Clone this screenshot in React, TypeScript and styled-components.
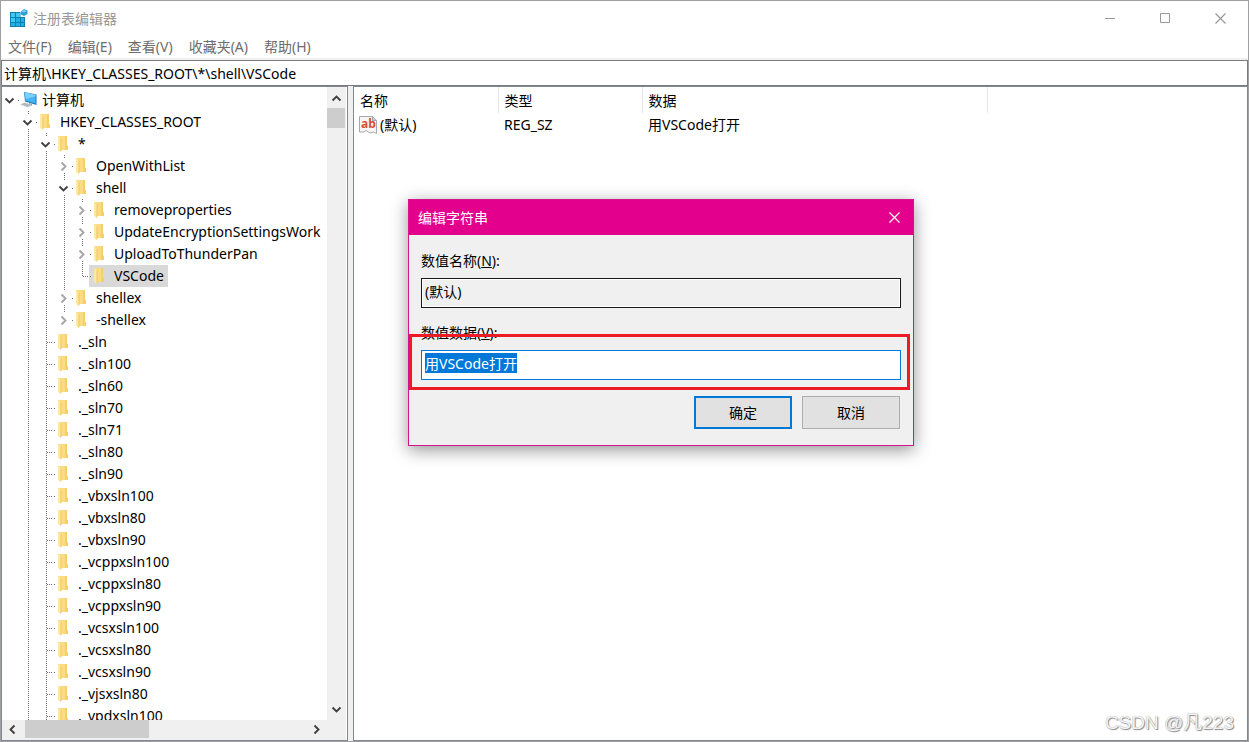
import React, { useEffect, useRef } from "react";
import styled, { createGlobalStyle, css } from "styled-components";

const GlobalStyle = createGlobalStyle`
  * { box-sizing: border-box; }
  body {
    margin: 0;
    background: #fff;
    color: #000;
    font: 14px/22px "Noto Sans", "Noto Sans CJK SC", sans-serif;
  }
  button, input { font: inherit; color: inherit; }
`;

const Window = styled.div`
  position: relative;
  display: flex;
  flex-direction: column;
  height: 100vh;
  overflow: hidden;
  border: 1px solid #a0a0a3;
  background: #fff;
`;

const TitleBar = styled.header`
  display: flex;
  align-items: center;
  flex: none;
  height: 35px;
  padding-left: 8px;
  color: #999;
`;

const Title = styled.h1`
  flex: 1;
  margin: 0 0 0 5px;
  font-size: 14px;
  font-weight: 400;
`;

const CaptionButton = styled.button`
  display: grid;
  place-items: center;
  width: 55px;
  height: 34px;
  padding: 0;
  border: 0;
  background: none;
  color: inherit;
`;

const MenuBar = styled.nav`
  display: flex;
  flex: none;
  height: 22px;
  padding-left: 7px;
  gap: 16px;
`;

const MenuItem = styled.button`
  padding: 0;
  border: 0;
  background: none;
  color: #6d6d6d;
  line-height: 22px;
  white-space: nowrap;
`;

const AddressStrip = styled.div`
  flex: none;
  padding-top: 2px;
  background: #f0f0f0;
`;

const Address = styled.input`
  display: block;
  width: 100%;
  height: 26px;
  padding: 0 2px;
  border: 1px solid #7a7a7a;
  background: #fff;
  outline: 0;
`;

const Panes = styled.main`
  display: flex;
  flex: 1;
  min-height: 0;
  gap: 5px;
  background: #f0f0f0;
`;

const pane = css`
  display: flex;
  flex-direction: column;
  border: 1px solid #828790;
  background: #fff;
`;

const TreePane = styled.section`
  ${pane}
  width: 347px;
  flex: none;
  padding-right: 1px;
`;

const ListPane = styled.section`
  ${pane}
  flex: 1;
  min-width: 0;
`;

const TreeBody = styled.div`
  display: flex;
  flex: 1;
  min-height: 0;
`;

const TreeRows = styled.ul`
  flex: 1;
  min-width: 0;
  margin: 0;
  padding: 2px 0 0;
  list-style: none;
  overflow: hidden;
`;

const TreeRow = styled.li`
  display: flex;
  height: 22px;
  white-space: nowrap;
`;

type LineKind = "none" | "full" | "top";

const dotsDown = "repeating-linear-gradient(to bottom, #707070 0 1px, transparent 1px 2px)";
const dotsAcross = "repeating-linear-gradient(to right, #707070 0 1px, transparent 1px 2px)";

const Guide = styled.span<{ $line: LineKind; $root?: boolean; $branch?: boolean }>`
  display: flex;
  justify-content: flex-end;
  align-items: center;
  flex: none;
  width: ${(p) => (p.$root ? 15 : 18)}px;
  padding-right: 2px;
  background-repeat: no-repeat;
  background-image: ${(p) => (p.$line === "none" ? "none" : dotsDown)}${(p) => (p.$branch ? `, ${dotsAcross}` : "")};
  background-size: 1px ${(p) => (p.$line === "top" ? "11px" : "22px")}, 6px 1px;
  background-position: right 6px top 0, right 0 top 11px;
`;

const Toggle = styled.button`
  display: grid;
  place-items: center;
  width: 11px;
  height: 14px;
  padding: 0;
  border: 0;
  background: #fff;
`;

const Node = styled.button<{ $selected?: boolean }>`
  display: flex;
  align-items: center;
  height: 22px;
  padding: 0 4px 0 0;
  border: 0;
  background: ${(p) => (p.$selected ? "#d9d9d9" : "none")};
  white-space: nowrap;
`;

const NodeIcon = styled.span`
  display: flex;
  align-items: center;
  width: 25px;
  height: 22px;
  padding-left: 3px;
  background: linear-gradient(#707070, #707070) 1px 11px / 1px 1px no-repeat;
`;

const VerticalBar = styled.div`
  display: flex;
  flex-direction: column;
  align-items: center;
  width: 19px;
  flex: none;
  padding: 1px 1px 1px 0;
  background: #f0f0f0;
`;

const HorizontalBar = styled.div`
  display: flex;
  align-items: center;
  height: 20px;
  flex: none;
  padding: 0 20px 2px 0;
  background: #f0f0f0;
`;

const ScrollButton = styled.button`
  display: grid;
  place-items: center;
  width: 20px;
  height: 20px;
  padding: 0;
  border: 0;
  background: none;
`;

const Track = styled.div<{ $inset?: boolean }>`
  flex: 1;
  align-self: stretch;
  display: flex;
  padding-left: ${(p) => (p.$inset ? 3 : 0)}px;
`;

const Thumb = styled.div<{ $vertical?: boolean }>`
  background: #cdcdcd;
  ${(p) => (p.$vertical ? "width: 18px; height: 20px;" : "width: 124px; height: 18px;")}
`;

const ValueTable = styled.table`
  width: 633px;
  table-layout: fixed;
  border-collapse: collapse;
  text-align: left;
`;

const HeadCell = styled.th<{ $width: number }>`
  width: ${(p) => p.$width}px;
  height: 26px;
  padding: 2px 6px 0;
  border-right: 1px solid #e5e5e5;
  font-weight: 400;
`;

const ValueCell = styled.td`
  height: 23px;
  padding: 1px 6px 0;
`;

const ValueName = styled.span`
  display: flex;
  align-items: center;
  gap: 3px;
`;

const IconCell = styled(ValueCell)`
  padding: 1px 5px 0;
`;

const Dialog = styled.form`
  position: absolute;
  left: 407px;
  top: 198px;
  width: 506px;
  border: 1px solid #d6148e;
  background: #f0f0f0;
  box-shadow: 0 4px 16px rgba(0, 0, 0, 0.42);
`;

const DialogTitle = styled.div`
  display: flex;
  align-items: center;
  justify-content: space-between;
  height: 35px;
  padding-left: 9px;
  background: #e3008c;
  color: #fff;
`;

const DialogClose = styled(CaptionButton)`
  width: 38px;
`;

const DialogBody = styled.div`
  display: flex;
  flex-direction: column;
  gap: 14px;
  padding: 15px 12px 16px;
`;

const Field = styled.div`
  display: flex;
  flex-direction: column;
  gap: 6px;
`;

const TextBox = styled.input`
  height: 30px;
  padding: 0 3px 4px;
  border: 1px solid #0078d7;
  border-radius: 0;
  background: #fff;
  outline: 0;
  line-height: 20px;
  &:read-only {
    border-color: #1a1a1a;
    background: #f0f0f0;
    box-shadow: inset 0 0 0 1px #fff;
  }
  &::selection {
    background: #0078d7;
    color: #fff;
  }
`;

const Actions = styled.div`
  display: flex;
  justify-content: flex-end;
  gap: 10px;
  padding: 2px 1px 0 0;
`;

const ActionButton = styled.button<{ $primary?: boolean }>`
  width: 98px;
  height: 33px;
  padding: 0;
  border: ${(p) => (p.$primary ? "2px solid #0078d7" : "1px solid #adadad")};
  background: #e1e1e1;
`;

const Highlight = styled.div`
  position: absolute;
  left: 0;
  right: 3px;
  top: 134px;
  height: 56px;
  border: 3px solid #ed1c24;
  pointer-events: none;
`;

const Watermark = styled.div`
  position: absolute;
  right: 14px;
  bottom: 6px;
  color: #f4f4f4;
  font: 19px/24px "Liberation Sans", "Noto Sans CJK SC", sans-serif;
  text-shadow: 1px 1px 1px #888, 0 0 1px #999;
`;

function Chevron({ dir, color = "#404040" }: { dir: "up" | "down" | "left" | "right"; color?: string }) {
  const paths = {
    up: "M1.5 7.5 5.5 3.5 9.5 7.5",
    down: "M1.5 3.5 5.5 7.5 9.5 3.5",
    left: "M7.5 1.5 3.5 5.5 7.5 9.5",
    right: "M3.5 1.5 7.5 5.5 3.5 9.5",
  };
  return (
    <svg width="11" height="11" viewBox="0 0 11 11" fill="none" stroke={color} strokeWidth="1.9">
      <path d={paths[dir]} />
    </svg>
  );
}

function CloseCross() {
  return (
    <svg width="11" height="11" stroke="currentColor" strokeWidth="1.2">
      <path d="M.5.5l10 10M10.500.5l-10 10" />
    </svg>
  );
}

function Folder() {
  return (
    <svg width="18" height="18" viewBox="0 0 18 18">
      <path d="M2 1h9v9.500l1 1V15H4z" fill="#fbdc82" />
      <path d="M9 1h2v9.500l1 1V15H9z" fill="#f5cf68" />
      <path d="M2 1l3 2.500V17l-3-2z" fill="#ffe8a3" />
      <path d="M4.500 3.500h1V16l-1 .8z" fill="#efc75e" />
    </svg>
  );
}

function Computer() {
  return (
    <svg width="18" height="18" viewBox="0 0 18 18">
      <path d="M4 1l12.500 2.500V14L5 10.500z" fill="#2577b5" />
      <path d="M4.500 1.500l11 2.200v8.800L5.500 9.500z" fill="#45b4f4" />
      <path d="M4.500 1.500l11 2.200v1.600L6 8z" fill="#7ad0ff" />
      <path d="M9 12l3 1v2l-3-1z" fill="#8fa0ac" />
      <path d="M0 13.500l5-2 7 2.500-4 2.500z" fill="#c3ccd3" />
      <path d="M2 13.500l3.500-1.200M4 14.300l3.500-1.200M6 15.200l3.500-1.400" stroke="#8d99a3" strokeWidth=".6" />
    </svg>
  );
}

function RegistryIcon() {
  return (
    <svg width="19" height="19" viewBox="0 0 19 19">
      <path d="M1 3h15v15H1z" fill="#0b7fb0" />
      <path d="M2 4h4v4H2zM7 4h4v4H7zM2 9h4v4H2z" fill="#3fc8f3" />
      <path d="M7 9h4v4H7zM12 9h3v4h-3zM2 14h4v3H2zM7 14h4v3H7zM12 14h3v3h-3z" fill="#22aee0" />
      <path d="M11.500 2h6v6h-6z" fill="#fff" />
      <path d="M12 2.500l3-2.500 3.500 1.500v3.500L15 7l-3-1.500z" fill="#2b9fd0" />
      <path d="M12.500 2.500l2.700-1.500 2.500 1-2.500 1.500z" fill="#7fd6f5" />
    </svg>
  );
}

function StringIcon() {
  return (
    <svg width="18" height="18" viewBox="0 0 18 18">
      <path d="M.5.5h13l4 4V17.500l-3-1.500-3.500 1-4-2.500-2.500 1.500h-4z" fill="#f6f6f6" stroke="#a8a8a8" />
      <path d="M13.500.5v4h4z" fill="#d0d0d0" stroke="#a8a8a8" />
      <text x="2" y="12" fontSize="12" fontWeight="700" fontFamily="Open Sans, sans-serif" fill="#d8502f">ab</text>
    </svg>
  );
}

type Entry = { name: string; depth: number; state: "open" | "closed" | "leaf"; last?: boolean; selected?: boolean };

const entries: Entry[] = [
  { name: "计算机", depth: 0, state: "open", last: true },
  { name: "HKEY_CLASSES_ROOT", depth: 1, state: "open" },
  { name: "*", depth: 2, state: "open" },
  { name: "OpenWithList", depth: 3, state: "closed" },
  { name: "shell", depth: 3, state: "open" },
  { name: "removeproperties", depth: 4, state: "closed" },
  { name: "UpdateEncryptionSettingsWork", depth: 4, state: "closed" },
  { name: "UploadToThunderPan", depth: 4, state: "closed" },
  { name: "VSCode", depth: 4, state: "leaf", last: true, selected: true },
  { name: "shellex", depth: 3, state: "closed" },
  { name: "-shellex", depth: 3, state: "closed", last: true },
  ...[
    "._sln", "._sln100", "._sln60", "._sln70", "._sln71", "._sln80", "._sln90",
    "._vbxsln100", "._vbxsln80", "._vbxsln90", "._vcppxsln100", "._vcppxsln80", "._vcppxsln90",
    "._vcsxsln100", "._vcsxsln80", "._vcsxsln90", "._vjsxsln80", "._vpdxsln100",
  ].map((name): Entry => ({ name, depth: 2, state: "leaf" })),
];

function TreeEntry({ entry }: { entry: Entry }) {
  const { name, depth, state, last, selected } = entry;
  const ancestors = Array.from({ length: depth }, (_, i) => i);
  const line: LineKind = depth === 0 ? "none" : last ? "top" : "full";
  return (
    <TreeRow>
      {ancestors.map((i) => (
        <Guide key={i} $root={i === 0} $line={i === 0 ? "none" : "full"} />
      ))}
      <Guide $root={depth === 0} $line={line} $branch={state === "leaf"}>
        {state !== "leaf" && (
          <Toggle type="button" aria-label={name}>
            <Chevron dir={state === "open" ? "down" : "right"} color={state === "open" ? "#404040" : "#a6a6a6"} />
          </Toggle>
        )}
      </Guide>
      <Node type="button" $selected={selected}>
        <NodeIcon>{depth === 0 ? <Computer /> : <Folder />}</NodeIcon>
        {name}
      </Node>
    </TreeRow>
  );
}

export default function App() {
  const dataRef = useRef<HTMLInputElement>(null);

  useEffect(() => {
    dataRef.current?.focus();
    dataRef.current?.select();
  }, []);

  return (
    <>
      <GlobalStyle />
      <Window>
        <TitleBar>
          <RegistryIcon />
          <Title>注册表编辑器</Title>
          <CaptionButton aria-label="最小化">
            <svg width="11" height="11" stroke="currentColor"><path d="M0 5.500h10" /></svg>
          </CaptionButton>
          <CaptionButton aria-label="最大化">
            <svg width="11" height="11" stroke="currentColor" fill="none"><path d="M.5.5h9v9h-9z" /></svg>
          </CaptionButton>
          <CaptionButton aria-label="关闭">
            <CloseCross />
          </CaptionButton>
        </TitleBar>
        <MenuBar>
          {["文件(F)", "编辑(E)", "查看(V)", "收藏夹(A)", "帮助(H)"].map((item) => (
            <MenuItem key={item}>{item}</MenuItem>
          ))}
        </MenuBar>
        <AddressStrip>
          <Address aria-label="地址" defaultValue="计算机\HKEY_CLASSES_ROOT\*\shell\VSCode" />
        </AddressStrip>
        <Panes>
          <TreePane>
            <TreeBody>
              <TreeRows>
                {entries.map((entry) => <TreeEntry key={entry.name} entry={entry} />)}
              </TreeRows>
              <VerticalBar>
                <ScrollButton aria-label="向上滚动"><Chevron dir="up" /></ScrollButton>
                <Track><Thumb $vertical /></Track>
                <ScrollButton aria-label="向下滚动"><Chevron dir="down" /></ScrollButton>
              </VerticalBar>
            </TreeBody>
            <HorizontalBar>
              <ScrollButton aria-label="向左滚动"><Chevron dir="left" /></ScrollButton>
              <Track $inset><Thumb /></Track>
              <ScrollButton aria-label="向右滚动"><Chevron dir="right" /></ScrollButton>
            </HorizontalBar>
          </TreePane>
          <ListPane>
            <ValueTable>
              <thead>
                <tr>
                  <HeadCell $width={144}>名称</HeadCell>
                  <HeadCell $width={144}>类型</HeadCell>
                  <HeadCell $width={345}>数据</HeadCell>
                </tr>
              </thead>
              <tbody>
                <tr>
                  <IconCell><ValueName><StringIcon />(默认)</ValueName></IconCell>
                  <ValueCell>REG_SZ</ValueCell>
                  <ValueCell>用VSCode打开</ValueCell>
                </tr>
              </tbody>
            </ValueTable>
          </ListPane>
        </Panes>

        <Dialog role="dialog" aria-label="编辑字符串" onSubmit={(e) => e.preventDefault()}>
          <DialogTitle>
            编辑字符串
            <DialogClose type="button" aria-label="关闭">
              <CloseCross />
            </DialogClose>
          </DialogTitle>
          <DialogBody>
            <Field>
              <label htmlFor="value-name">数值名称(<u>N</u>):</label>
              <TextBox id="value-name" readOnly value="(默认)" />
            </Field>
            <Field>
              <label htmlFor="value-data">数值数据(<u>V</u>):</label>
              <TextBox id="value-data" ref={dataRef} defaultValue="用VSCode打开" />
            </Field>
            <Actions>
              <ActionButton type="submit" $primary>确定</ActionButton>
              <ActionButton type="button">取消</ActionButton>
            </Actions>
          </DialogBody>
          <Highlight />
        </Dialog>
        <Watermark>CSDN @凡223</Watermark>
      </Window>
    </>
  );
}
